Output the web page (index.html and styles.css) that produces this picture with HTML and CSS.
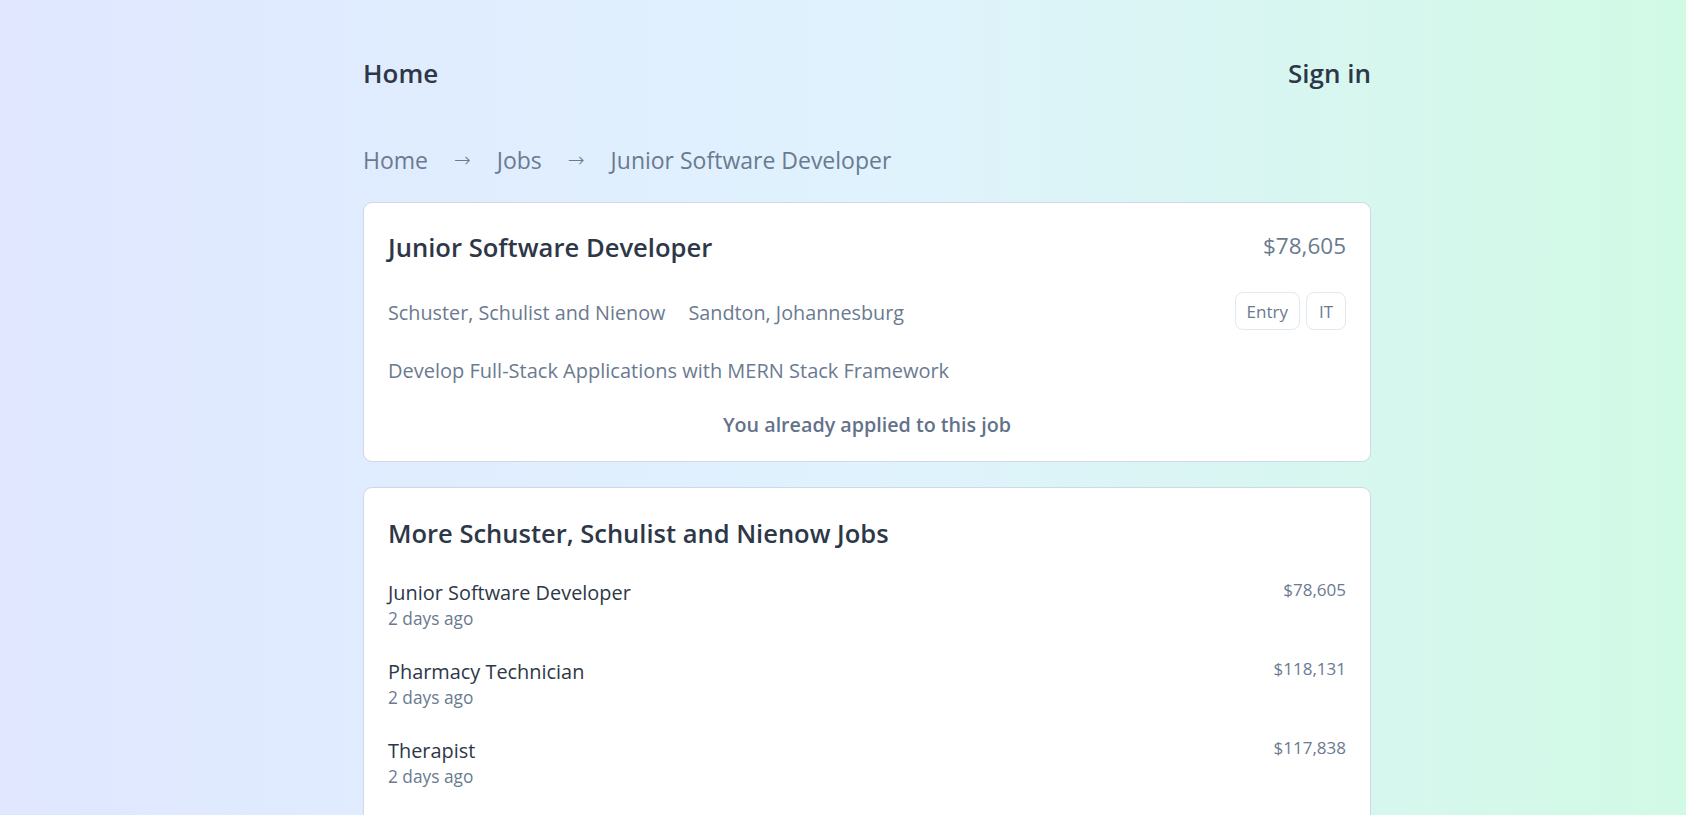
FILE: index.html
```html
<!DOCTYPE html>
<html lang="en">
<head>
<meta charset="utf-8">
<title>Junior Software Developer</title>
<link rel="stylesheet" href="styles.css">
</head>
<body>
<div class="page">
  <header class="topbar">
    <a class="topbar-link" href="#">Home</a>
    <a class="topbar-link" href="#">Sign in</a>
  </header>

  <nav class="crumbs">
    <a href="#">Home</a>
    <span class="arrow">→</span>
    <a href="#">Jobs</a>
    <span class="arrow">→</span>
    <span>Junior Software Developer</span>
  </nav>

  <section class="card job">
    <div class="job-head">
      <h1 class="job-title">Junior Software Developer</h1>
      <div class="job-salary">$78,605</div>
    </div>
    <div class="job-meta">
      <div class="job-where">
        <span>Schuster, Schulist and Nienow</span>
        <span>Sandton, Johannesburg</span>
      </div>
      <div class="tags">
        <span class="tag">Entry</span>
        <span class="tag">IT</span>
      </div>
    </div>
    <p class="job-desc">Develop Full-Stack Applications with MERN Stack Framework</p>
    <p class="applied">You already applied to this job</p>
  </section>

  <section class="card more">
    <h2 class="more-title">More Schuster, Schulist and Nienow Jobs</h2>
    <ul class="more-list">
      <li class="more-item">
        <div>
          <div class="item-title">Junior Software Developer</div>
          <div class="item-date">2 days ago</div>
        </div>
        <div class="item-salary">$78,605</div>
      </li>
      <li class="more-item">
        <div>
          <div class="item-title">Pharmacy Technician</div>
          <div class="item-date">2 days ago</div>
        </div>
        <div class="item-salary">$118,131</div>
      </li>
      <li class="more-item">
        <div>
          <div class="item-title">Therapist</div>
          <div class="item-date">2 days ago</div>
        </div>
        <div class="item-salary">$117,838</div>
      </li>
    </ul>
  </section>
</div>
</body>
</html>
```

FILE: styles.css
```css
* { box-sizing: border-box; }

html, body {
  margin: 0;
  padding: 0;
}

body {
  min-height: 815px;
  background: linear-gradient(to right, #e0e7ff 0%, #e0f2fe 50%, #d1fae5 100%);
  font-family: "Open Sans", "Noto Sans", "Liberation Sans", sans-serif;
  color: #2d3748;
}

a { color: inherit; text-decoration: none; }

.page {
  width: 1008px;
  margin-left: 363px;
  padding-top: 57px;
}

.topbar {
  display: flex;
  justify-content: space-between;
  align-items: center;
  height: 32px;
}

.topbar-link {
  font-size: 26px;
  font-weight: 600;
  line-height: 32px;
  color: #2d3748;
}

.crumbs {
  margin-top: 55px;
  display: flex;
  align-items: center;
  gap: 26px;
  font-size: 23px;
  line-height: 32px;
  color: #6b7a90;
}

.crumbs .arrow {
  font-family: "DejaVu Sans", sans-serif;
  font-size: 20px;
  font-weight: 300;
}

.card {
  background: #ffffff;
  border: 1px solid #cfd8e4;
  border-radius: 9px;
  padding: 0 24px;
}

.job {
  margin-top: 26px;
  padding-top: 29px;
  padding-bottom: 22px;
}

.job-head {
  display: flex;
  justify-content: space-between;
  align-items: center;
  height: 32px;
}

.job-title {
  margin: 0;
  font-size: 25.6px;
  font-weight: 600;
  line-height: 32px;
  color: #2d3748;
}

.job-salary {
  font-size: 22.5px;
  line-height: 28px;
  color: #6b7a90;
  margin-top: -4px;
}

.job-meta {
  margin-top: 28px;
  display: flex;
  justify-content: space-between;
  align-items: center;
  height: 38px;
}

.job-where {
  display: flex;
  gap: 23px;
  font-size: 19.8px;
  line-height: 28px;
  color: #6b7a90;
  padding-top: 4px;
}

.tags {
  display: flex;
  gap: 6px;
}

.tag {
  display: flex;
  align-items: center;
  justify-content: center;
  min-width: 40px;
  height: 38px;
  padding: 0 11px;
  border: 1px solid #e2e8f0;
  border-radius: 8px;
  font-size: 17px;
  color: #6b7a90;
}

.job-desc {
  margin: 27px 0 0;
  font-size: 20px;
  line-height: 28px;
  color: #6b7a90;
}

.applied {
  margin: 26px 0 0;
  text-align: center;
  font-size: 19.7px;
  font-weight: 600;
  line-height: 28px;
  color: #63728a;
}

.more {
  margin-top: 25px;
  padding-top: 29px;
  padding-bottom: 48px;
}

.more-title {
  margin: 0;
  font-size: 25.5px;
  font-weight: 600;
  line-height: 32px;
  color: #2d3748;
}

.more-list {
  list-style: none;
  margin: 31px 0 0;
  padding: 0;
  display: flex;
  flex-direction: column;
  gap: 27px;
}

.more-item {
  display: flex;
  justify-content: space-between;
  align-items: flex-start;
}

.item-title {
  font-size: 19.9px;
  line-height: 26px;
  color: #2d3748;
}

.item-date {
  font-size: 17.3px;
  line-height: 26px;
  color: #6b7a90;
}

.item-salary {
  font-size: 17px;
  line-height: 20px;
  color: #6b7a90;
}
```
